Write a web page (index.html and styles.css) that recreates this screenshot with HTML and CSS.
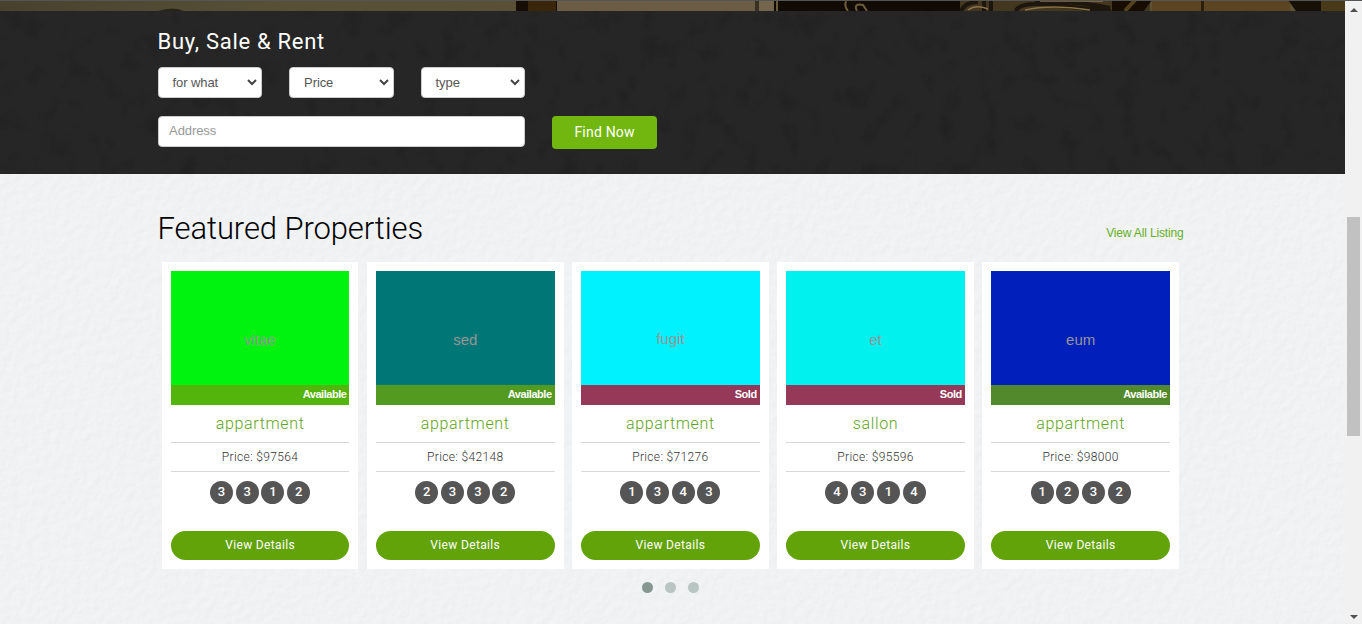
FILE: index.html
```
<!DOCTYPE html>
<html lang="en">
<head>
<meta charset="utf-8">
<title>Featured Properties</title>
<link rel="stylesheet" href="styles.css">
</head>
<body>
<div class="page">
  <main class="content">
    <svg class="banner" viewBox="0 0 1345 11" preserveAspectRatio="none">
      <defs>
        <linearGradient id="wall"><stop offset="0" stop-color="#48412e"/><stop offset=".2" stop-color="#575037"/><stop offset="1" stop-color="#5f5134"/></linearGradient>
        <filter id="soft"><feGaussianBlur stdDeviation=".7"/></filter>
      </defs>
      <rect width="1345" height="11" fill="url(#wall)"/>
      <path d="M158 11q16-5 26 0z" fill="#292419"/>
      <rect x="516" width="41" height="11" fill="#160e04"/>
      <rect x="528" width="28" height="11" fill="#3a270b"/>
      <rect x="557" width="198" height="11" fill="#6b5d45"/>
      <rect x="755" width="4" height="11" fill="#383020"/>
      <rect x="759" width="15" height="11" fill="#74664c"/>
      <rect x="774" width="200" height="11" fill="#120b05"/>
      <rect x="960" width="190" height="11" fill="#43371f"/>
      <g filter="url(#soft)">
        <path d="M777 1v10M846 1q-2 5 2 10M857 11q-4-8 6-6l4 6" stroke="#6b5b39" stroke-width="2" fill="none"/>
        <path d="M961 11q4-9 17-9M984 0v11M991 0v11M1016 11q3-8 25-7l70 7M1035 3q40-3 75 5" stroke="#1a1208" stroke-width="4" fill="none"/>
        <path d="M968 10q8-6 20-1M1025 10q25-6 65 0M1040 1h63" stroke="#897149" stroke-width="1.5" fill="none"/>
        <path d="M1112 0h40l-8 11h-32z" fill="#171006"/>
        <path d="M1125 11l10-11" stroke="#54421f" stroke-width="4"/>
      </g>
      <rect x="1152" width="138" height="11" fill="#5b4421"/>
      <rect x="1201" width="3" height="11" fill="#2c1f0c"/>
      <path d="M1288 0h33v11h-25z" fill="#171007"/>
      <rect x="1321" width="24" height="11" fill="#483a19"/>
      <rect width="1345" height="1" fill="#555"/>
    </svg>

    <section class="search">
      <svg class="texture">
        <filter id="grunge" x="0" y="0" width="100%" height="100%" color-interpolation-filters="sRGB">
          <feTurbulence type="fractalNoise" baseFrequency=".05 .04" numOctaves="5" seed="8"/>
          <feColorMatrix values="0 0 0 0 .1  0 0 0 0 .1  0 0 0 0 .1  3 0 0 0 -1.65"/>
        </filter>
        <rect width="100%" height="100%" filter="url(#grunge)"/>
      </svg>
      <div class="container search-body">
        <h3 class="search-title">Buy, Sale &amp; Rent</h3>
        <div class="filters">
          <div class="field select">for what <svg class="chevron" viewBox="0 0 10 7"><path d="M1 1l4 4 4-4"/></svg></div>
          <div class="field select">Price <svg class="chevron" viewBox="0 0 10 7"><path d="M1 1l4 4 4-4"/></svg></div>
          <div class="field select">type <svg class="chevron" viewBox="0 0 10 7"><path d="M1 1l4 4 4-4"/></svg></div>
        </div>
        <div class="address-row">
          <div class="field address">Address</div>
          <button class="find">Find Now</button>
        </div>
      </div>
    </section>

    <section class="featured">
      <svg class="texture">
        <filter id="paper" x="0" y="0" width="100%" height="100%" color-interpolation-filters="sRGB">
          <feTurbulence type="fractalNoise" baseFrequency=".13" numOctaves="3" seed="3" result="n"/>
          <feDiffuseLighting in="n" lighting-color="#f0f2f4" surfaceScale=".22" diffuseConstant="1.155"><feDistantLight azimuth="225" elevation="60"/></feDiffuseLighting>
        </filter>
        <rect width="100%" height="100%" filter="url(#paper)"/>
      </svg>
      <div class="container">
        <header class="featured-head">
          <h2 class="featured-title">Featured Properties</h2>
          <a class="view-all">View All Listing</a>
        </header>
        <div class="cards">
          <article class="card">
            <div class="photo vitae"><span class="word">vitae</span><div class="status">Available</div></div>
            <h4 class="name">appartment</h4><p class="price">Price: $97564</p>
            <div class="counts"><span>3</span><span>3</span><span>1</span><span>2</span></div>
            <a class="details">View Details</a>
          </article>
          <article class="card">
            <div class="photo sed"><span class="word">sed</span><div class="status">Available</div></div>
            <h4 class="name">appartment</h4><p class="price">Price: $42148</p>
            <div class="counts"><span>2</span><span>3</span><span>3</span><span>2</span></div>
            <a class="details">View Details</a>
          </article>
          <article class="card">
            <div class="photo fugit"><span class="word">fugit</span><div class="status sold">Sold</div></div>
            <h4 class="name">appartment</h4><p class="price">Price: $71276</p>
            <div class="counts"><span>1</span><span>3</span><span>4</span><span>3</span></div>
            <a class="details">View Details</a>
          </article>
          <article class="card">
            <div class="photo et"><span class="word">et</span><div class="status sold">Sold</div></div>
            <h4 class="name">sallon</h4><p class="price">Price: $95596</p>
            <div class="counts"><span>4</span><span>3</span><span>1</span><span>4</span></div>
            <a class="details">View Details</a>
          </article>
          <article class="card">
            <div class="photo eum"><span class="word">eum</span><div class="status">Available</div></div>
            <h4 class="name">appartment</h4><p class="price">Price: $98000</p>
            <div class="counts"><span>1</span><span>2</span><span>3</span><span>2</span></div>
            <a class="details">View Details</a>
          </article>
        </div>
        <div class="dots"><i class="dot active"></i><i class="dot"></i><i class="dot"></i></div>
      </div>
    </section>
  </main>
  <aside class="scrollbar">
    <svg class="arrow" viewBox="0 0 8 4"><path d="M0 4l4-4 4 4z"/></svg>
    <div class="thumb"></div>
    <svg class="arrow" viewBox="0 0 8 4"><path d="M0 0l4 4 4-4z"/></svg>
  </aside>
</div>
</body>
</html>
```
FILE: styles.css
```
* { box-sizing: border-box; }
body { margin: 0; font-family: "Liberation Sans", Arial, sans-serif; overflow: hidden; }
h2, h3, h4, p { margin: 0; font-weight: 400; }
.page { display: flex; width: 1362px; height: 624px; }
.content { width: 1345px; display: flex; flex-direction: column; }
.banner { display: block; width: 1345px; height: 11px; flex: none; }
.container { position: relative; margin-left: 157.6px; width: 1026px; }
.texture { position: absolute; inset: 0; width: 100%; height: 100%; opacity: .35; }

.search { position: relative; height: 163px; background: #262626; flex: none; }
.search-body { padding-top: 15px; }
.search-title { font: 400 22px/32px Roboto, sans-serif; letter-spacing: .7px; color: #fff; height: 41px; white-space: nowrap; }
.filters { display: flex; gap: 27px; }
.field { height: 31px; background: #fff; border: 1px solid #ccc; border-radius: 4px; font-size: 13px; color: #555; }
.select { width: 104.5px; padding: 0 4px 0 14px; display: flex; align-items: center; justify-content: space-between; letter-spacing: -.1px; }
.chevron { width: 10px; height: 7px; fill: none; stroke: #444; stroke-width: 2; }
.address-row { display: flex; gap: 27px; margin-top: 18px; }
.address { width: 367.5px; padding-left: 10.5px; line-height: 28px; letter-spacing: -.1px; color: #999; }
.find { width: 105px; height: 33px; border: 0; padding: 0; border-radius: 4px; background: #72b70f; color: #fff; font: 400 14px/33px Roboto, sans-serif; letter-spacing: .2px; }

.featured { position: relative; flex: 1; background: #f0f2f4; }
.featured-head { height: 88px; padding-top: 35px; display: flex; justify-content: space-between; }
.featured-title { font: 300 31px/40px Roboto, sans-serif; letter-spacing: -.1px; color: #000; white-space: nowrap; }
.view-all { font-size: 12px; line-height: 16px; letter-spacing: -.15px; color: #65b01e; margin-top: 16px; white-space: nowrap; }
.cards { display: grid; grid-template-columns: repeat(5, 196.8px); gap: 8.35px; padding-left: 4.1px; }
.card { height: 307px; background: #fff; padding: 9px; text-align: center; font-family: Roboto, sans-serif; }
.photo { height: 134px; display: flex; flex-direction: column; justify-content: flex-end; font-family: "Liberation Sans", Arial, sans-serif; }
.word { color: #969696; font-size: 15px; line-height: 20px; margin-bottom: 35px; }
.fugit .word { margin-bottom: 36px; }
.vitae { background: #00f30f; }
.sed { background: #007777; }
.fugit { background: #00f1ff; }
.et { background: #00f1ee; }
.eum { background: #001fbb; }
.status { height: 20px; line-height: 19px; padding-right: 3px; text-align: right; font-size: 11px; letter-spacing: -.45px; font-weight: 700; color: #fff; background: rgba(104, 164, 10, .8); }
.status.sold { background: #963857; }
.name { height: 38px; line-height: 37px; font-size: 16px; font-weight: 300; letter-spacing: .65px; color: #60a51b; border-bottom: 1px solid #d8d8d8; }
.price { height: 29px; line-height: 28px; font-size: 12px; font-weight: 300; letter-spacing: .35px; color: #333; border-bottom: 1px solid #d8d8d8; }
.counts { display: flex; justify-content: center; gap: 2.7px; margin-top: 9px; }
.counts span { width: 23px; height: 23px; border-radius: 50%; background: #555; color: #fff; font-size: 13px; font-weight: 500; line-height: 22px; }
.details { display: block; margin-top: 27px; height: 29px; border-radius: 15px; background: #63a30a; color: #fff; font-size: 12px; line-height: 28px; letter-spacing: .35px; }
.dots { display: flex; justify-content: center; gap: 12px; margin-top: 13px; }
.dot { width: 11px; height: 11px; border-radius: 50%; background: #b8c5c2; }
.dot.active { background: #869791; }

.scrollbar { width: 17px; background: #f1f1f1; border-top: 1px solid #555; display: flex; flex-direction: column; align-items: center; padding: 7px 0 5px; }
.arrow { width: 8px; height: 4px; fill: #505050; }
.thumb { width: 13px; height: 219px; background: #c1c1c1; margin: 205px 0 auto; }
```
